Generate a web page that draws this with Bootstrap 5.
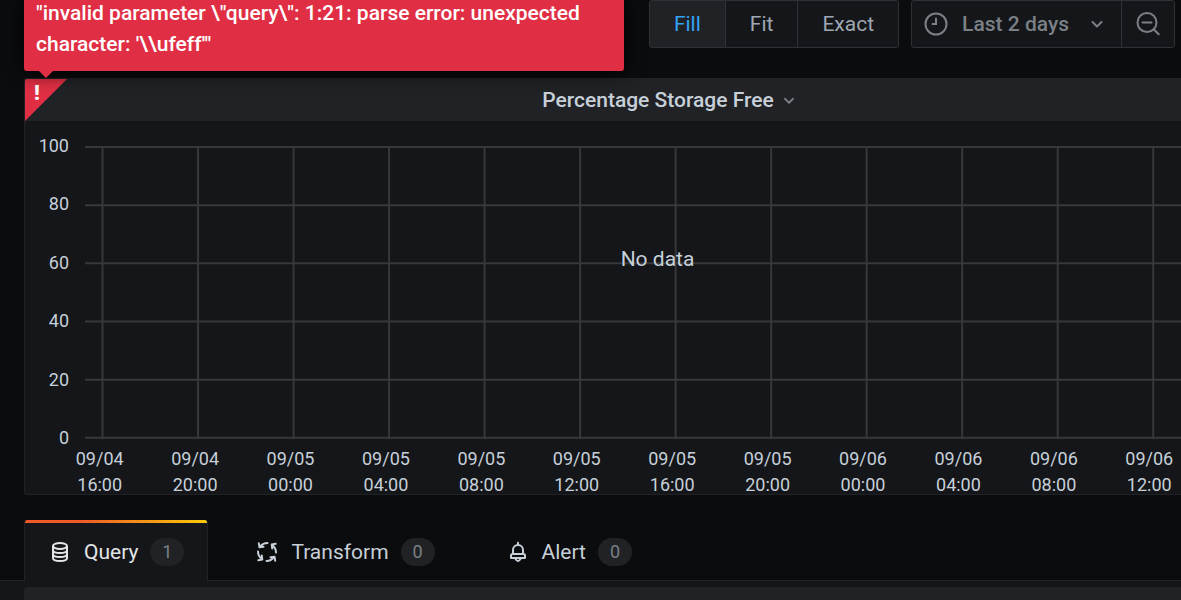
<!DOCTYPE html>
<html lang="en">
<head>
<meta charset="utf-8">
<meta name="viewport" content="width=device-width, initial-scale=1">
<title>Edit panel</title>
<link href="https://cdn.jsdelivr.net/npm/bootstrap@5.3.0/dist/css/bootstrap.min.css" rel="stylesheet">
<style>
body{background:#0b0c0e;color:#c7d0d9;font-family:Roboto,"Liberation Sans",sans-serif;font-size:21px;line-height:30px;overflow-x:hidden}
svg{display:block;flex:none}
.toolbar{padding-right:6px;margin-bottom:30px}
.tool-btn{--bs-btn-color:#9fa7b3;--bs-btn-bg:#141619;--bs-btn-border-color:#2c3235;--bs-btn-hover-color:#c7d0d9;--bs-btn-hover-bg:#202226;--bs-btn-hover-border-color:#2c3235;--bs-btn-active-color:#33a2f5;--bs-btn-active-bg:#202226;--bs-btn-active-border-color:#2c3235;--bs-btn-font-size:21px;--bs-btn-line-height:30px;--bs-btn-padding-x:24px;--bs-btn-padding-y:8px;--bs-btn-border-radius:3px;font-family:inherit}
.time-btn{--bs-btn-color:#7b8087;--bs-btn-padding-x:14px;font-weight:500}
.range-btn{--bs-btn-padding-x:12px}
.clock{margin-right:14px}
.error-tip{position:absolute;z-index:5;top:-2px;left:24px;width:600px;padding:0 12px 11px;background:#e02f44;color:#fff;font-weight:500;line-height:31px;border-radius:3px;box-shadow:0 0 20px #000}
.error-tip::after{content:"";position:absolute;top:100%;left:15px;border:7px solid transparent;border-top-color:#e02f44;border-bottom:0}
.viz{margin-left:24px;background:#141619;border:1px solid #202226;border-right:0;border-radius:3px 0 0 3px}
.viz-head{height:42px;background:#202226;padding-left:110px}
.viz-head h1{font-size:21px;line-height:30px;font-weight:500}
.corner{position:absolute;top:0;left:0;width:42px;height:42px;padding:0 0 0 9px;border:0;background:#e02f44;color:#fff;clip-path:polygon(0 0,100% 0,0 100%);font-size:21px;font-weight:900;line-height:28px;text-align:left;display:flex}
.axis-text{font-size:18px;line-height:26px}
.y-axis{width:44px;height:318px;margin:12px 16px 0 0}
.plot{height:293px;margin-top:25px}
.plot line{stroke:#37383b;stroke-width:2}
.no-data{inset:0;padding:0 0 68px 49px}
.x-axis{display:grid;grid-template-columns:repeat(12,1fr);margin:-5px -16px -4px 27px}
.tabs{padding-left:24px;gap:23px;margin-top:25px;border-bottom:1px solid #202226}
.tab-link{height:60px;padding:4px 24px 0;gap:12px;color:#c7d0d9;text-decoration:none}
.tab-link.active{position:relative;background:#141619;color:#e3e5e8;border:solid #202226;border-width:0 1px;padding:2px 23px 0;margin-bottom:-1px;height:61px;border-radius:3px 3px 0 0;overflow:hidden}
.tab-link.active::before{content:"";position:absolute;top:0;left:0;right:0;height:3px;background:linear-gradient(90deg,#f05a28 30%,#fbca0a 99%)}
.count{min-width:34px;height:28px;border-radius:14px;background:#202226;color:#7b8087;font-size:18px;line-height:28px;text-align:center}
.pane{background:#141619;padding:6px 0 0 24px}
.pane-bar{height:13px;background:#202226;border-radius:3px 0 0 0}
</style>
</head>
<body>
<div class="overflow-hidden position-relative">
<header class="toolbar d-flex justify-content-end gap-2">
  <div class="btn-group me-1" role="group" aria-label="Panel size">
    <button type="button" class="btn tool-btn active">Fill</button>
    <button type="button" class="btn tool-btn">Fit</button>
    <button type="button" class="btn tool-btn">Exact</button>
  </div>
  <div class="btn-group" role="group" aria-label="Time range">
    <button type="button" class="btn tool-btn time-btn range-btn d-flex align-items-center">
      <svg class="clock" width="24" height="24" viewBox="0 0 24 24" fill="none" stroke="currentColor" stroke-width="2" stroke-linecap="round"><circle cx="12" cy="12" r="10.5"/><path d="M12 6.500V12H8.500"/></svg>
      Last 2 days
      <svg class="ms-3" width="24" height="24" viewBox="0 0 24 24" fill="none" stroke="currentColor" stroke-width="2" stroke-linecap="round" stroke-linejoin="round"><path d="M7.500 10 12 14.500 16.500 10"/></svg>
    </button>
    <button type="button" class="btn tool-btn time-btn" aria-label="Zoom out">
      <svg width="24" height="24" viewBox="0 0 24 24" fill="none" stroke="currentColor" stroke-width="2" stroke-linecap="round"><circle cx="11" cy="10.500" r="9.500"/><path d="M6.500 10.500h9M17.700 17.200l5 5"/></svg>
    </button>
  </div>
</header>
<div class="error-tip" role="tooltip">"invalid parameter \"query\": 1:21: parse error: unexpected character: '\\ufeff'"</div>

<section class="viz position-relative overflow-hidden">
  <div class="viz-head d-flex align-items-center justify-content-center">
    <h1 class="m-0 position-relative">Percentage Storage Free
      <svg class="position-absolute top-50 start-100 translate-middle-y ms-1" width="22" height="22" viewBox="0 0 24 24" fill="none" stroke="#7b8087" stroke-width="2" stroke-linecap="round" stroke-linejoin="round"><path d="M7.500 10.500 12 15 16.500 10.500"/></svg>
    </h1>
  </div>
  <button type="button" class="corner" aria-label="Panel error">!</button>
  <div class="d-flex">
    <div class="y-axis axis-text d-flex flex-column justify-content-between text-end">
      <span>100</span><span>80</span><span>60</span><span>40</span><span>20</span><span>0</span>
    </div>
    <div class="plot position-relative flex-grow-1">
      <svg id="gridlines" width="100%" height="100%" aria-hidden="true"></svg>
      <div class="no-data position-absolute d-flex align-items-center justify-content-center">No data</div>
    </div>
  </div>
  <div class="x-axis axis-text text-center">
    <span>09/04<br>16:00</span><span>09/04<br>20:00</span><span>09/05<br>00:00</span><span>09/05<br>04:00</span><span>09/05<br>08:00</span><span>09/05<br>12:00</span><span>09/05<br>16:00</span><span>09/05<br>20:00</span><span>09/06<br>00:00</span><span>09/06<br>04:00</span><span>09/06<br>08:00</span><span>09/06<br>12:00</span>
  </div>
</section>

<nav class="tabs d-flex" aria-label="Panel editor">
  <a href="#query" class="tab-link active d-flex align-items-center" aria-current="page">
    <svg width="24" height="24" viewBox="0 0 24 24" fill="none" stroke="currentColor" stroke-width="2"><ellipse cx="12" cy="6" rx="7" ry="3"/><path d="M5 6v12c0 1.700 3 3 7 3s7-1.300 7-3V6M5 10c0 1.700 3 3 7 3s7-1.300 7-3M5 14c0 1.700 3 3 7 3s7-1.300 7-3"/></svg>
    Query <span class="count">1</span>
  </a>
  <a href="#transform" class="tab-link d-flex align-items-center">
    <svg width="24" height="24" viewBox="0 0 24 24" fill="none" stroke="currentColor" stroke-width="2" stroke-linecap="round" stroke-linejoin="round"><g id="arc"><path d="M12.500 3C9.500 3 6.800 4.500 5 6.800M3.800 3.300l.7 4 4-.5"/></g><use href="#arc" transform="rotate(90 12 12)"/><use href="#arc" transform="rotate(180 12 12)"/><use href="#arc" transform="rotate(270 12 12)"/></svg>
    Transform <span class="count">0</span>
  </a>
  <a href="#alert" class="tab-link d-flex align-items-center">
    <svg width="24" height="24" viewBox="0 0 24 24" fill="none" stroke="currentColor" stroke-width="2" stroke-linecap="round" stroke-linejoin="round"><path d="M12 2.800V5M7 14v-4a5 5 0 0 1 10 0v4M5 18v-2.500Q5 14 6.500 14h11q1.500 0 1.500 1.500V18ZM9.500 19q2.500 4 5 0"/></svg>
    Alert <span class="count">0</span>
  </a>
</nav>
<div class="pane"><div class="pane-bar"></div></div>
</div>
<script src="https://cdn.jsdelivr.net/npm/bootstrap@5.3.0/dist/js/bootstrap.bundle.min.js"></script>
<script>
const grid = document.getElementById('gridlines');
function addLine(a) {
  const el = document.createElementNS('http://www.w3.org/2000/svg', 'line');
  for (const k in a) el.setAttribute(k, a[k]);
  grid.append(el);
}
for (let i = 0; i < 12; i++) {
  const x = 1.6 + i * 8.715 + '%';
  addLine({x1: x, x2: x, y1: 0, y2: '100%'});
}
for (let i = 0; i < 6; i++) {
  const y = 0.35 + i * 19.85 + '%';
  addLine({x1: 0, x2: '100%', y1: y, y2: y});
}
</script>
</body>
</html>
